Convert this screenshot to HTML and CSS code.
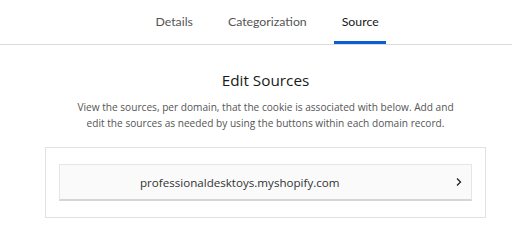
FILE: index.html
```html
<!DOCTYPE html>
<html>
<head>
<meta charset="utf-8">
<link rel="stylesheet" href="styles.css">
</head>
<body>
<nav class="tabs">
  <a class="tab">Details</a>
  <a class="tab">Categorization</a>
  <a class="tab active">Source</a>
</nav>
<main class="content">
  <h1 class="title">Edit Sources</h1>
  <p class="desc">View the sources, per domain, that the cookie is associated with below. Add and edit the sources as needed by using the buttons within each domain record.</p>
  <section class="box">
    <div class="row">
      <span class="domain">professionaldesktoys.myshopify.com</span>
      <svg class="chev" width="8" height="10" viewBox="0 0 8 10"><path d="M2 1.5 L5.5 5 L2 8.5" fill="none" stroke="#222" stroke-width="1.3"/></svg>
    </div>
  </section>
</main>
</body>
</html>
```
FILE: styles.css
```css
* { box-sizing: border-box; }
body {
  margin: 0;
  background: #fff;
  font-family: Lato, "Open Sans", sans-serif;
  color: #1f1f1f;
}
.tabs {
  display: flex;
  height: 45px;
  padding-left: 148px;
  border-bottom: 1px solid #dddbda;
  align-items: stretch;
}
.tab {
  display: flex;
  align-items: center;
  padding: 2px 7.5px 0;
  font-size: 12.3px;
  color: #555;
  margin-right: 20px;
  border-bottom: 3px solid transparent;
}
.tab.active {
  color: #181818;
  margin-right: 0;
  border-bottom-color: #0b5cd5;
}
.content {
  margin-left: 45px;
  width: 441px;
  text-align: center;
}
.title {
  margin: 24px 0 0;
  font-size: 15.3px;
  font-weight: 400;
  font-family: "Open Sans", sans-serif;
  color: #1a1a1a;
  line-height: 22px;
}
.desc {
  margin: 8px 0 0;
  font-family: "Open Sans", sans-serif;
  font-size: 10.15px;
  line-height: 16px;
  color: #555;
  padding: 0 28px;
}
.box {
  margin-top: 16px;
  border: 1px solid #e2e2e2;
  padding: 16px 13px 16px 13px;
}
.row {
  display: flex;
  align-items: center;
  justify-content: space-between;
  height: 37px;
  background: #fafafa;
  border: 1px solid #e6e6e6;
  border-bottom: 2px solid #d5d5d5;
  padding: 0 8px 0 80px;
}
.domain {
  font-family: "Open Sans", sans-serif;
  font-size: 11.6px;
  color: #333;
}
.chev { display: block; }
```
